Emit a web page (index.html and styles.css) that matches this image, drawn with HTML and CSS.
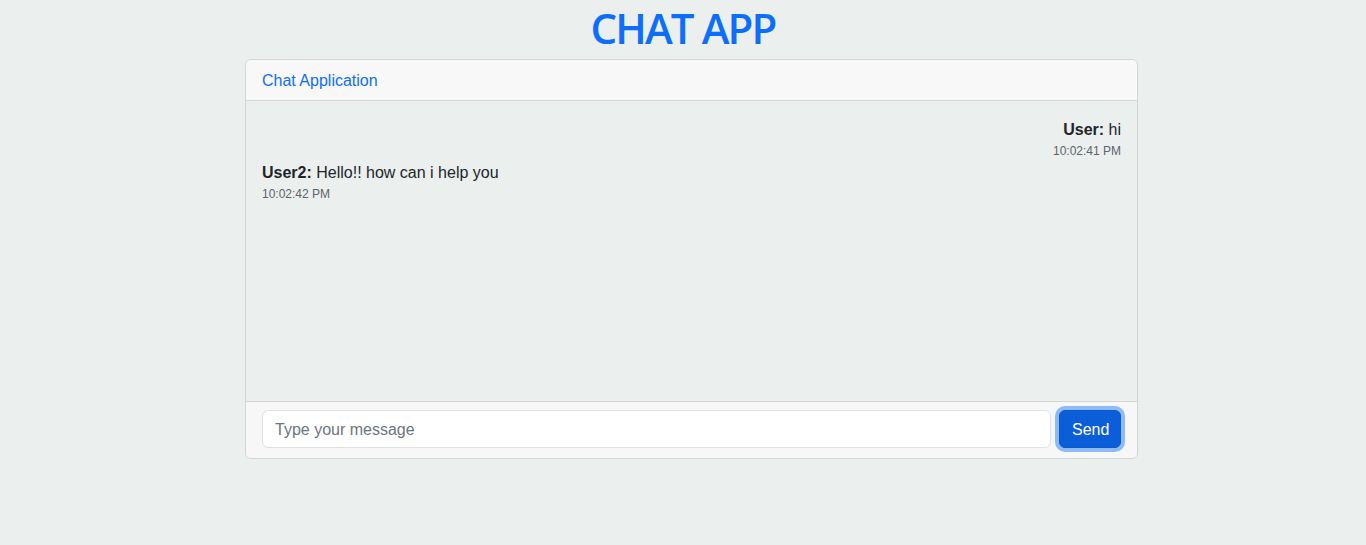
FILE: index.html
```html
<!DOCTYPE html>
<html lang="en">
<head>
<meta charset="utf-8">
<title>Chat App</title>
<link rel="stylesheet" href="styles.css">
</head>
<body>
  <h1 class="title">CHAT APP</h1>
  <div class="card">
    <div class="card-header">Chat Application</div>
    <div class="card-body">
      <div class="msg msg-right">
        <div class="msg-text"><strong>User:</strong> hi</div>
        <div class="msg-time">10:02:41 PM</div>
      </div>
      <div class="msg">
        <div class="msg-text"><strong>User2:</strong> Hello!! how can i help you</div>
        <div class="msg-time">10:02:42 PM</div>
      </div>
    </div>
    <div class="card-footer">
      <input class="input" type="text" placeholder="Type your message">
      <button class="btn">Send</button>
    </div>
  </div>
</body>
</html>
```
FILE: styles.css
```css
* { box-sizing: border-box; }
html, body { margin: 0; padding: 0; }
body {
  background: #ebf0ee;
  font-family: "Liberation Sans", Arial, sans-serif;
  font-size: 16px;
  line-height: 1.5;
  color: #212529;
}
.title {
  margin: 3px 0 6px;
  font-family: "Open Sans", "Liberation Sans", sans-serif;
  font-size: 42px;
  line-height: 50px;
  font-weight: 600;
  letter-spacing: -1.9px;
  color: #0d6efd;
  text-align: center;
}
.card {
  margin-left: 245px;
  width: 893px;
  border: 1px solid #d2d6d5;
  border-radius: 6px;
  overflow: hidden;
}
.card-header {
  padding: 9px 16px 7px;
  background: #f8f8f8;
  border-bottom: 1px solid #d2d6d5;
  color: #0d6efd;
  line-height: 24px;
}
.card-body {
  height: 300px;
  padding: 17px 16px 15px;
  display: flex;
  flex-direction: column;
  gap: 1px;
}
.msg-right { text-align: right; }
.msg-text { line-height: 24px; }
.msg-text strong { font-weight: 700; }
.msg-time {
  font-size: 12px;
  line-height: 18px;
  color: #5c636a;
}
.card-footer {
  display: flex;
  gap: 8px;
  padding: 8px 16px 10px;
  background: #f7f7f7;
  border-top: 1px solid #d2d6d5;
}
.input {
  flex: 1;
  height: 38px;
  padding: 7px 12px 5px;
  border: 1px solid #dee2e6;
  border-radius: 6px;
  background: #fff;
  font-family: inherit;
  font-size: 16px;
  color: #212529;
}
.input::placeholder { color: #6c757d; }
.btn {
  width: 62px;
  height: 38px;
  padding: 7px 12px 5px;
  border: 1px solid #0a58ca;
  border-radius: 6px;
  background: #0b5ed7;
  color: #fff;
  font-family: inherit;
  font-size: 16px;
  line-height: 24px;
  box-shadow: 0 0 0 4px rgba(13, 110, 253, 0.45);
}
```
